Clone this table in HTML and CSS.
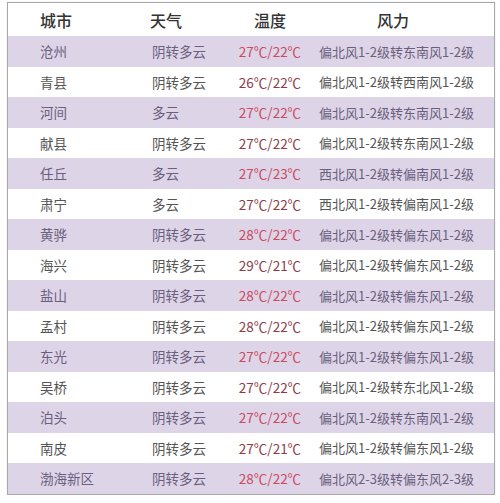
FILE: index.html
```html
<!DOCTYPE html>
<html lang="zh">
<head>
<meta charset="utf-8">
<link rel="stylesheet" href="styles.css">
</head>
<body>
<div class="frame">
  <div class="row head">
    <div class="c city">城市</div>
    <div class="c wx">天气</div>
    <div class="c temp">温度</div>
    <div class="c wind">风力</div>
  </div>
  <div class="row odd"><div class="c city">沧州</div><div class="c wx">阴转多云</div><div class="c temp">27℃/22℃</div><div class="c wind">偏北风1-2级转东南风1-2级</div></div>
  <div class="row even"><div class="c city">青县</div><div class="c wx">阴转多云</div><div class="c temp">26℃/22℃</div><div class="c wind">偏北风1-2级转西南风1-2级</div></div>
  <div class="row odd"><div class="c city">河间</div><div class="c wx">多云</div><div class="c temp">27℃/22℃</div><div class="c wind">偏北风1-2级转东南风1-2级</div></div>
  <div class="row even"><div class="c city">献县</div><div class="c wx">阴转多云</div><div class="c temp">27℃/22℃</div><div class="c wind">偏北风1-2级转东南风1-2级</div></div>
  <div class="row odd"><div class="c city">任丘</div><div class="c wx">多云</div><div class="c temp">27℃/23℃</div><div class="c wind">西北风1-2级转偏南风1-2级</div></div>
  <div class="row even"><div class="c city">肃宁</div><div class="c wx">多云</div><div class="c temp">27℃/22℃</div><div class="c wind">西北风1-2级转偏南风1-2级</div></div>
  <div class="row odd"><div class="c city">黄骅</div><div class="c wx">阴转多云</div><div class="c temp">28℃/22℃</div><div class="c wind">偏北风1-2级转偏东风1-2级</div></div>
  <div class="row even"><div class="c city">海兴</div><div class="c wx">阴转多云</div><div class="c temp">29℃/21℃</div><div class="c wind">偏北风1-2级转偏东风1-2级</div></div>
  <div class="row odd"><div class="c city">盐山</div><div class="c wx">阴转多云</div><div class="c temp">28℃/22℃</div><div class="c wind">偏北风1-2级转偏东风1-2级</div></div>
  <div class="row even"><div class="c city">孟村</div><div class="c wx">阴转多云</div><div class="c temp">28℃/22℃</div><div class="c wind">偏北风1-2级转偏东风1-2级</div></div>
  <div class="row odd"><div class="c city">东光</div><div class="c wx">阴转多云</div><div class="c temp">27℃/22℃</div><div class="c wind">偏北风1-2级转偏东风1-2级</div></div>
  <div class="row even"><div class="c city">吴桥</div><div class="c wx">阴转多云</div><div class="c temp">27℃/22℃</div><div class="c wind">偏北风1-2级转东北风1-2级</div></div>
  <div class="row odd"><div class="c city">泊头</div><div class="c wx">阴转多云</div><div class="c temp">27℃/22℃</div><div class="c wind">偏北风1-2级转东南风1-2级</div></div>
  <div class="row even"><div class="c city">南皮</div><div class="c wx">阴转多云</div><div class="c temp">27℃/21℃</div><div class="c wind">偏北风1-2级转偏东风1-2级</div></div>
  <div class="row odd"><div class="c city">渤海新区</div><div class="c wx">阴转多云</div><div class="c temp">28℃/22℃</div><div class="c wind">偏北风2-3级转偏东风2-3级</div></div>
</div>
</body>
</html>
```

FILE: styles.css
```css
html, body {
  margin: 0;
  padding: 0;
  background: #ffffff;
}

body {
  font-family: "Noto Sans CJK SC", "Noto Sans", sans-serif;
  font-size: 13.5px;
  color: #555;
}

.frame {
  margin: 2px 0 0 7px;
  width: 486px;
  border: 1px solid #a8a8a8;
  box-shadow: 0 0 1px #d0d0d0;
}

.row {
  display: grid;
  grid-template-columns: 132px 85px 90px 163px;
  padding-right: 16px;
  height: 30.5px;
  align-items: center;
  white-space: nowrap;
}

.row.head {
  height: 33px;
  font-size: 16px;
  font-weight: 500;
  color: #333;
  background: #fff;
}

.c.city { padding-left: 32px; }
.c.wx { padding-left: 12px; }
.c.temp { text-align: center; }
.c.wind { text-align: center; font-size: 13px; }

.head .c.wx { padding-left: 10px; }
.head .c.wind { font-size: 16px; padding-right: 7px; }

.row.odd {
  background: #ddd4e7;
  color: #6b5f7e;
}

.row.odd .temp { color: #cc4a62; }

.row.even {
  background: #ffffff;
  color: #555;
}

.row.even .temp { color: #8f3b47; }
```
